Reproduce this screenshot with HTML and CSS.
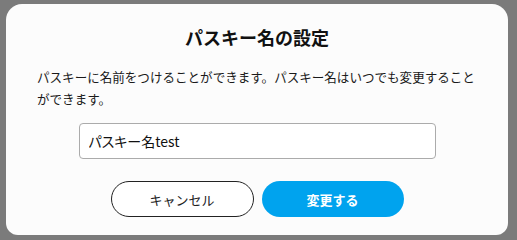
FILE: index.html
```html
<!DOCTYPE html>
<html lang="ja">
<head>
<meta charset="utf-8">
<link rel="stylesheet" href="styles.css">
</head>
<body>
<div class="dialog">
  <h1 class="title">パスキー名の設定</h1>
  <p class="desc">パスキーに名前をつけることができます。パスキー名はいつでも変更することができます。</p>
  <input class="field" type="text" value="パスキー名test">
  <div class="actions">
    <button class="btn btn-cancel">キャンセル</button>
    <button class="btn btn-primary">変更する</button>
  </div>
</div>
</body>
</html>
```
FILE: styles.css
```css
html, body {
  margin: 0;
  padding: 0;
}
body {
  width: 517px;
  height: 240px;
  box-sizing: border-box;
  padding: 4px 9px 5px 6px;
  background: #7b7b7b;
  font-family: "Noto Sans CJK JP", "Noto Sans", sans-serif;
  color: #1a1a1a;
}
.dialog {
  height: 231px;
  box-sizing: border-box;
  background: #fcfcfc;
  border-radius: 16px 16px 12px 12px;
  padding: 21px 31px 0 31px;
  display: flex;
  flex-direction: column;
  align-items: center;
}
.title {
  margin: 0;
  font-size: 18px;
  line-height: 24px;
  font-weight: 700;
  color: #111;
}
.desc {
  align-self: stretch;
  margin: 17px 0 0 0;
  font-size: 12.55px;
  line-height: 22px;
  color: #1a1a1a;
}
.field {
  margin-top: 13px;
  width: 357px;
  height: 36px;
  box-sizing: border-box;
  border: 1px solid #ababab;
  border-radius: 4px;
  background: #fff;
  padding: 0 9px;
  font-family: "Noto Sans CJK JP", sans-serif;
  font-size: 14px;
  font-feature-settings: "palt";
  color: #111;
  outline: none;
}
.actions {
  margin-top: 22px;
  display: flex;
  gap: 8px;
}
.btn {
  height: 36px;
  border-radius: 18px;
  font-family: "Noto Sans CJK JP", sans-serif;
  font-size: 13px;
  padding: 0;
  cursor: pointer;
}
.btn-cancel {
  width: 143px;
  background: #fff;
  border: 1px solid #222;
  color: #222;
}
.btn-primary {
  width: 142px;
  background: #00a3ee;
  border: none;
  color: #fff;
  font-weight: 700;
}
```
